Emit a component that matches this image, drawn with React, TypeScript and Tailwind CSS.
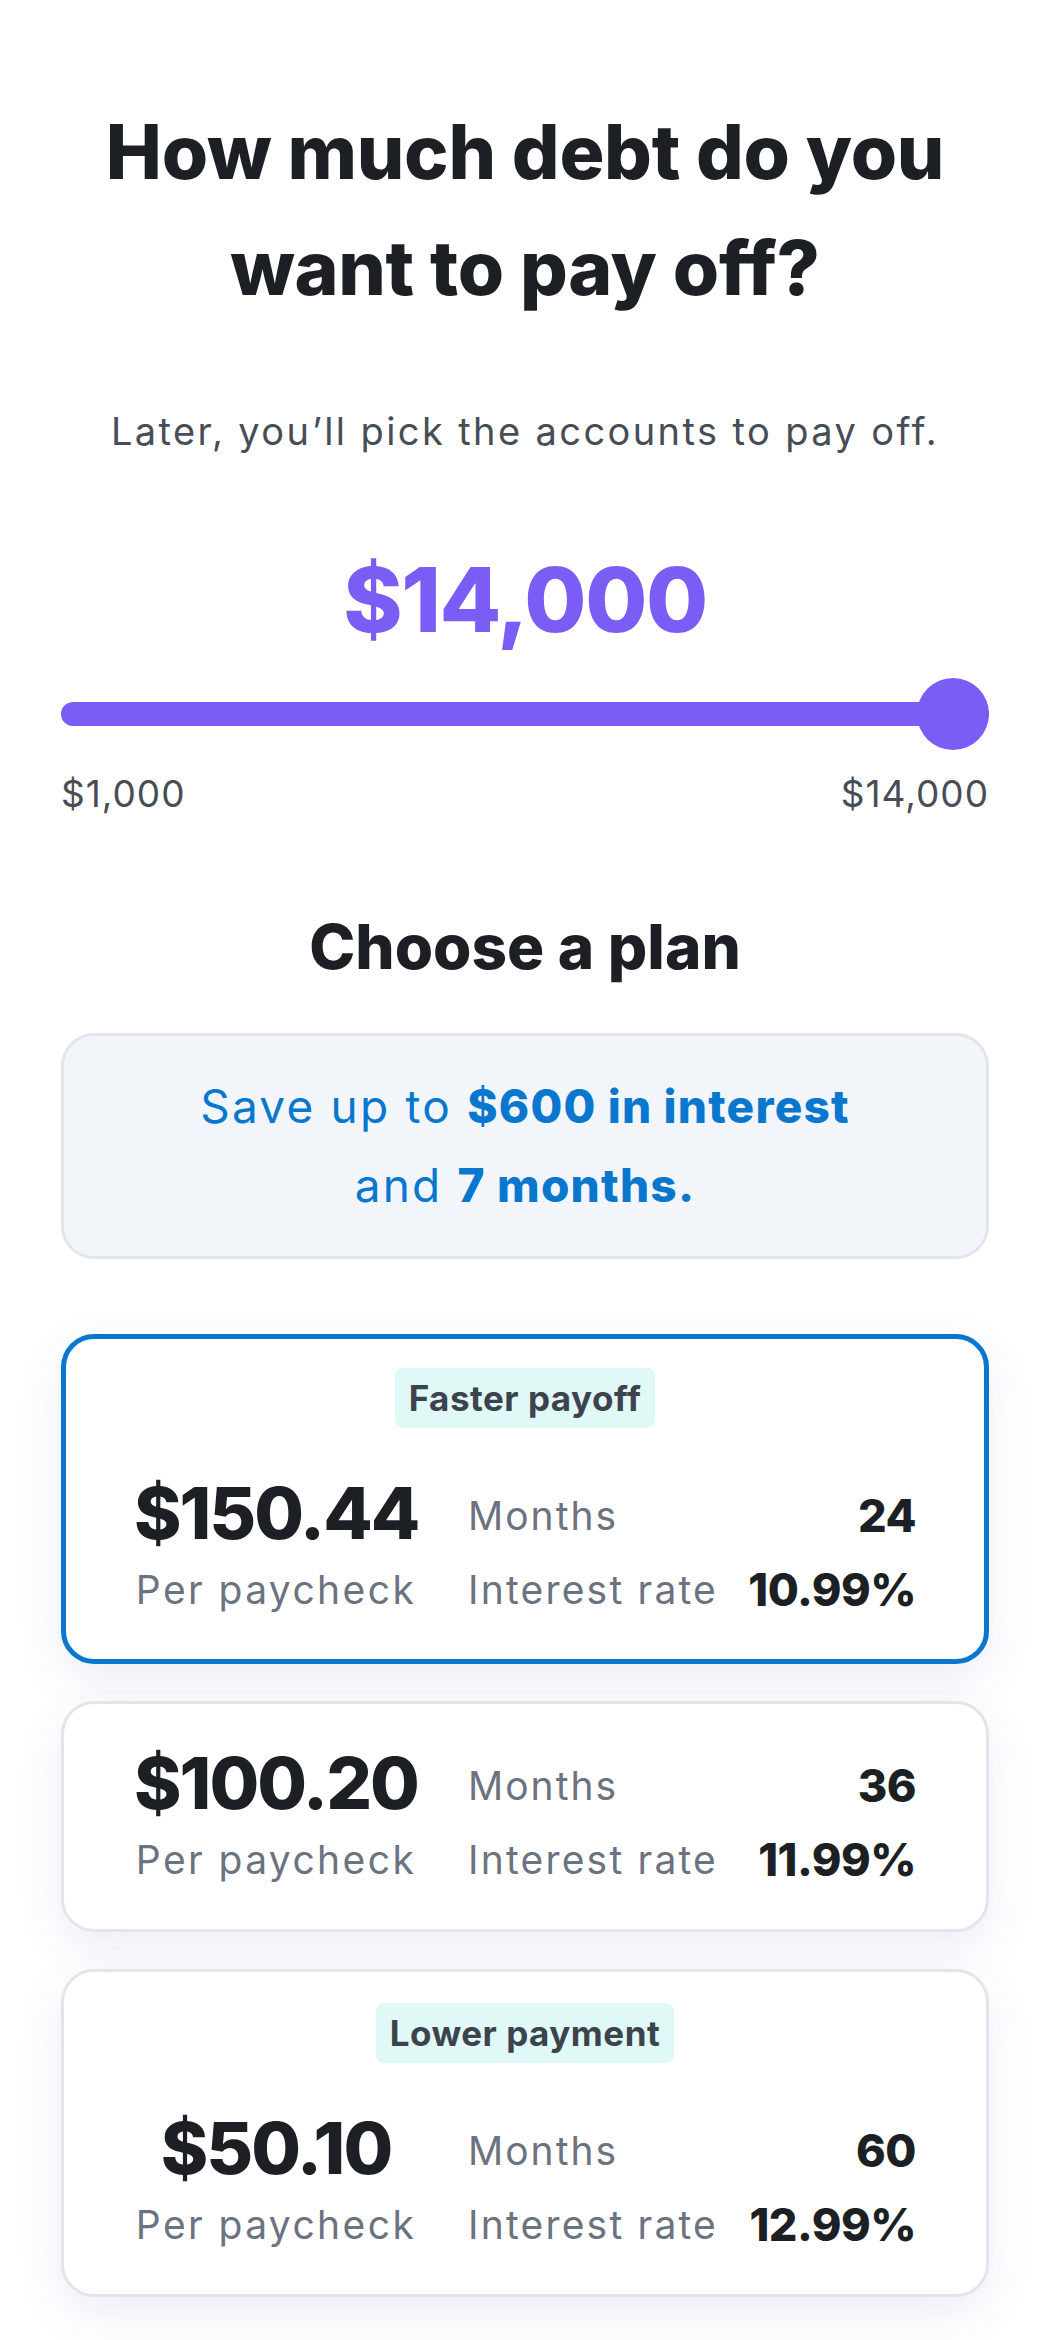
const plans = [
  { badge: "Faster payoff", amount: "$150.44", months: "24", rate: "10.99%", selected: true },
  { badge: null, amount: "$100.20", months: "36", rate: "11.99%", selected: false },
  { badge: "Lower payment", amount: "$50.10", months: "60", rate: "12.99%", selected: false },
]

export default function App() {
  return (
    <div className="min-h-screen bg-white font-['Inter',sans-serif] text-[#1c1f24]">
      <main className="px-[61px] pt-[94px] pb-[46px]">
        {/* Header */}
        <h1 className="text-center text-[75px] leading-[116px] font-extrabold tracking-[-0.3px]">
          How much debt do you
          <br />
          want to pay off?
        </h1>
        <p className="mt-[78px] text-center text-[38px] leading-[54px] tracking-[2.4px] text-[#474d57]">
          Later, you’ll pick the accounts to pay off.
        </p>

        {/* Amount + slider */}
        <div className="mt-[88px] text-center text-[90px] leading-[108px] font-extrabold text-[#7b5cf5] tracking-[-1.5px]">
          $14,000
        </div>
        <div className="relative mt-[24px] h-[72px] flex items-center">
          <div className="h-[24px] w-full rounded-full bg-[#7b5cf5]"></div>
          <div className="absolute right-0 top-0 h-[72px] w-[72px] rounded-full bg-[#7b5cf5]"></div>
        </div>
        <div className="mt-[17px] flex justify-between text-[37px] leading-[54px] tracking-[1px] text-[#474d57]">
          <span>$1,000</span>
          <span>$14,000</span>
        </div>

        {/* Plans */}
        <h2 className="mt-[81px] text-center text-[62px] leading-[90px] font-extrabold">Choose a plan</h2>
        <div className="mt-[41px] rounded-[33px] border-[3px] border-[#e2e5eb] bg-[#f2f6fb] py-[31px] text-center text-[46px] leading-[79px] tracking-[2.2px] text-[#0a77cf]">
          Save up to <span className="font-extrabold tracking-[1.2px]">$600 in interest</span>
          <br />
          and <span className="font-extrabold tracking-[1.2px]">7 months.</span>
        </div>

        <div className="mt-[75px] flex flex-col gap-[37px]">
          {plans.map((plan) => (
            <div
              key={plan.amount}
              className={
                plan.selected
                  ? "rounded-[33px] border-[5px] border-[#0a77cf] bg-white px-[68px] pt-[29px] pb-[40px] shadow-[0_16px_48px_rgba(40,70,140,0.09)]"
                  : "rounded-[33px] border-[3px] border-[#e2e5eb] bg-white px-[70px] pt-[31px] pb-[40px] shadow-[0_16px_48px_rgba(40,70,140,0.09)]"
              }
            >
              {plan.badge && (
                <div className="mb-[37px] flex justify-center">
                  <span className="rounded-[8px] bg-[#e0f8f6] px-[14px] text-[35px] leading-[60px] font-bold tracking-[0.5px] text-[#3d434d]">
                    {plan.badge}
                  </span>
                </div>
              )}
              <div className="grid grid-cols-[284px_1fr_auto] gap-x-[30px] items-center whitespace-nowrap">
                <div className="text-center text-[72px] leading-[96px] font-extrabold tracking-[-2px]">{plan.amount}</div>
                <div className="pl-[20px] pt-[6px] text-[39px] leading-[58px] tracking-[2px] text-[#6b7280]">Months</div>
                <div className="pt-[6px] text-right text-[45px] leading-[58px] font-extrabold tracking-[-0.5px]">{plan.months}</div>
                <div className="text-center text-[39px] leading-[58px] tracking-[2.4px] text-[#6b7280]">Per paycheck</div>
                <div className="pl-[20px] text-[39px] leading-[58px] tracking-[2.2px] text-[#6b7280]">Interest rate</div>
                <div className="text-right text-[45px] leading-[58px] font-extrabold tracking-[-0.5px]">{plan.rate}</div>
              </div>
            </div>
          ))}
        </div>
      </main>
    </div>
  )
}
